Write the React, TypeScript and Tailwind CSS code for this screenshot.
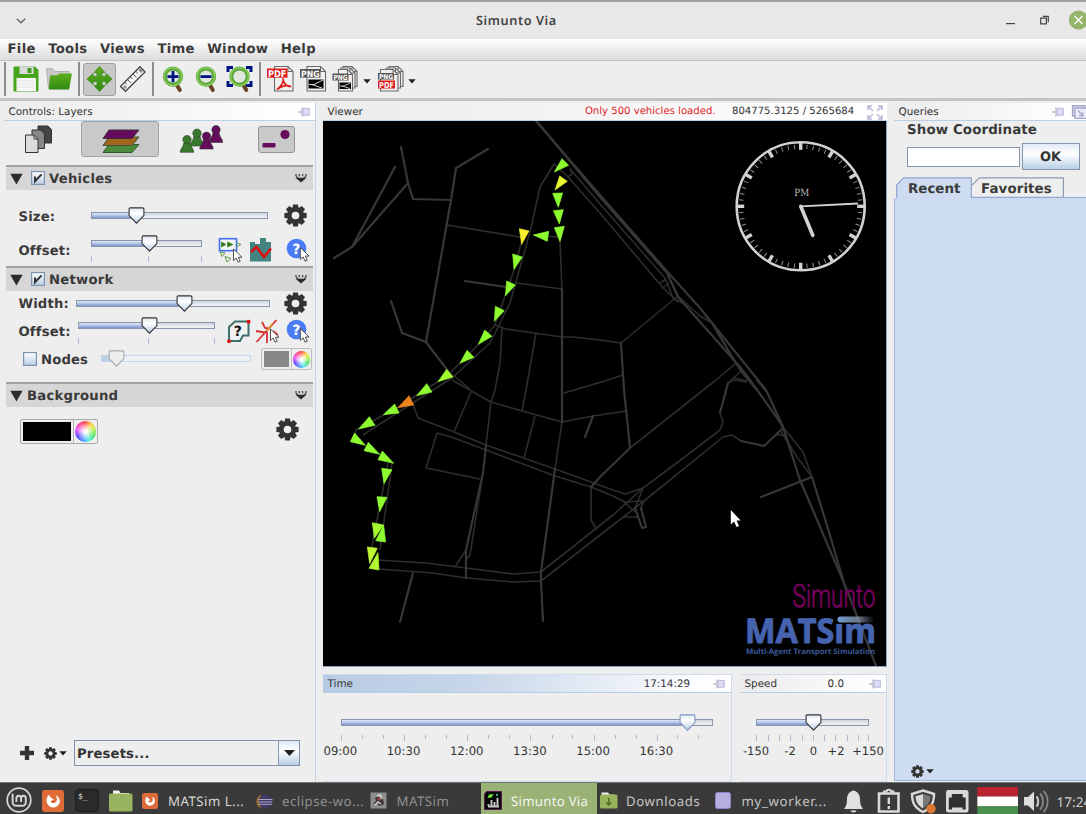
import React from "react";

type ArtProps = { x: number; y: number; w: number; h: number; className?: string; children: React.ReactNode };

function Art({ x, y, w, h, className = "", children }: ArtProps) {
  return (
    <svg width={w} height={h} viewBox={`${x} ${y} ${w} ${h}`} className={`block shrink-0 ${className}`} fill="none">
      {children}
    </svg>
  );
}

/* ---------- small shared pieces ---------- */

function Gear({ size, className = "" }: { size: number; className?: string }) {
  return (
    <svg width={size} height={size} viewBox="-12 -12 24 24" className={`block shrink-0 ${className}`}>
      {[0, 45, 90, 135, 180, 225, 270, 315].map((a) => (
        <path key={a} d="M-3.2 -7 L-2.5 -11.6 H2.5 L3.2 -7 Z" fill="#333" transform={`rotate(${a})`} />
      ))}
      <circle r="6.4" fill="none" stroke="#333" strokeWidth="4.8" />
    </svg>
  );
}

function Caret({ className = "" }: { className?: string }) {
  return (
    <svg width="8" height="5" viewBox="0 0 8 5" className={`block shrink-0 ${className}`}>
      <path d="M0.3 0.3H7.7L4 4.6Z" fill="#222" />
    </svg>
  );
}

function Pin({ className = "" }: { className?: string }) {
  return (
    <svg width="12" height="10" viewBox="0 0 12 10" className={`block shrink-0 ${className}`}>
      <path d="M5 1.4H11.3V8.2H5Z" fill="#dcdcfa" stroke="#b9b9d6" />
      <path d="M4.2 0.4V9.4M0.3 5H4" stroke="#c6c6d6" strokeWidth="2" fill="none" />
    </svg>
  );
}

function Pointer({ x, y, s = 1 }: { x: number; y: number; s?: number }) {
  return (
    <path
      transform={`translate(${x} ${y}) scale(${s})`}
      d="M0 0V12.5L3 9.9L5 14.4L7.3 13.4L5.3 9H9.2Z"
      fill="#fff"
      stroke="#444"
      strokeWidth="1"
    />
  );
}

type SliderProps = { width: number; pos: number; ticks?: number[]; disabled?: boolean; blue?: boolean; className?: string };

function Slider({ width, pos, ticks = [], disabled, blue, className = "" }: SliderProps) {
  const edge = blue ? "#7f94c4" : "#333";
  return (
    <div className={`relative flow-root h-[17px] shrink-0 ${className}`} style={{ width }}>
      <div
        className={`mt-[5px] flex h-[7px] border ${
          disabled ? "border-[#c3d5ea] bg-[#eef1f5]" : "border-[#8796ab] bg-[linear-gradient(#cfd6df,#f4f4f4)]"
        }`}
      >
        <div
          className={disabled ? "h-full bg-[#bccfe6]" : "h-full bg-[linear-gradient(#dfe8f8,#a9bce2_60%,#7d93c6)]"}
          style={{ width: disabled ? 8 : pos }}
        />
      </div>
      <svg width="17" height="17" viewBox="0 0 17 17" className="absolute top-0" style={{ left: pos - 8.5 }}>
        <defs>
          <linearGradient id="knob" x1="0" y1="0" x2="0" y2="1">
            <stop offset="0" stopColor="#dfe7f1" />
            <stop offset="0.35" stopColor="#fff" />
            <stop offset="1" stopColor="#b9cfe9" />
          </linearGradient>
        </defs>
        <path
          d="M2 0.9H15L15.9 1.8V8.6L8.5 16.2L1.1 8.6V1.8Z"
          fill={disabled ? "#eeeeee" : "url(#knob)"}
          stroke={disabled ? "#a3a9b1" : edge}
          strokeWidth="1.1"
        />
      </svg>
      {ticks.map((t) => (
        <div key={t} className="absolute top-[21px] h-[6px] w-px bg-[#a9bcd4]" style={{ left: t }} />
      ))}
    </div>
  );
}

function Check({ on }: { on?: boolean }) {
  return (
    <svg width="14" height="14" viewBox="0 0 14 14" className="block shrink-0">
      <defs>
        <linearGradient id="chk" x1="0" y1="0" x2="0" y2="1">
          <stop offset="0" stopColor="#fff" />
          <stop offset="1" stopColor="#b8cfe5" />
        </linearGradient>
      </defs>
      <rect x="0.6" y="0.6" width="12.8" height="12.8" fill="url(#chk)" stroke="#7e93ae" strokeWidth="1.2" />
      {on && <path d="M4 5.6V10.3L10.6 3.4" stroke="#333" strokeWidth="2" fill="none" />}
    </svg>
  );
}

function SectionHeader({ title, check }: { title: string; check?: boolean }) {
  return (
    <div className="ml-[2px] flex h-[25px] w-[307px] shrink-0 items-center border-t-2 border-[#a2a2a2] bg-[#d6d6d6]">
      <svg width="13" height="12" viewBox="0 0 13 12" className="ml-1 block">
        <path d="M0.3 0.8H12.6L6.4 11.4Z" fill="#2b2b2b" />
      </svg>
      <div className={check ? "ml-[8px] flex items-center" : "ml-[4px] flex items-center"}>
        {check && (
          <div className="mr-1">
            <Check on />
          </div>
        )}
        <span className="mt-[2px] text-[13.2px] leading-none font-bold tracking-[0.25px] text-[#3a3a3a]">{title}</span>
      </div>
      <svg width="12" height="9" viewBox="0 0 12 9" className="mr-[6px] mb-px ml-auto block">
        <path d="M0.5 3.8H11.5L6 8.6Z" fill="#2b2b2b" />
        <path d="M1 0V2M4.3 0V2.2M7.6 0V2.2M11 0V2M1 2.2L3 4M11 2.2L9 4" stroke="#444" strokeWidth="1.3" />
      </svg>
    </div>
  );
}

function PanelHeader({ title, children, blue }: { title: string; children?: React.ReactNode; blue?: boolean }) {
  return (
    <div
      className={`flex h-[18px] shrink-0 items-center border-b border-[#b8cfe5] pt-px ${
        blue
          ? "bg-[linear-gradient(90deg,#b8cbe4,#c6d5e9_35%,#ffffff_95%)]"
          : "bg-[linear-gradient(90deg,#ececec,#f2f2f2_35%,#ffffff_95%)]"
      }`}
    >
      <span className="mt-px ml-[4.5px] text-[10.4px] leading-none text-[#333]">{title}</span>
      {children}
    </div>
  );
}

function Wheel({ size }: { size: number }) {
  return (
    <div
      className="flex shrink-0 rounded-full bg-[conic-gradient(from_0deg,#ff4030,#ffd030,#a0f040,#30e060,#40e8e0,#4080ff,#5030ff,#e040ff,#ff3090,#ff4030)]"
      style={{ width: size, height: size }}
    >
      <div className="h-full w-full rounded-full bg-[radial-gradient(circle,#fff_8%,#ffffff00_70%)]" />
    </div>
  );
}

function HelpCursor({ className = "" }: { className?: string }) {
  return (
    <svg width="24" height="25" viewBox="0 0 24 25" className={`block shrink-0 ${className}`}>
      <circle cx="10.5" cy="10.5" r="9.8" fill="#4b7bf5" />
      <text x="10.2" y="15.6" textAnchor="middle" fontFamily="DejaVu Sans" fontWeight="700" fontSize="14" fill="#fff">
        ?
      </text>
      <Pointer x={14.3} y={9.5} s={0.95} />
    </svg>
  );
}

/* ---------- window chrome ---------- */

function TitleBar() {
  return (
    <div className="flex h-[39px] shrink-0 items-center border-t-2 border-[#a0a0a0] bg-[#e8e8e8]">
      <svg width="10" height="6" viewBox="0 0 10 6" className="ml-[16px] block">
        <path d="M0.8 0.8L5 4.8L9.2 0.8" stroke="#666" strokeWidth="1.4" fill="none" />
      </svg>
      <span className="ml-[450px] w-[82px] font-['Noto_Sans'] text-[12.7px] leading-none font-semibold tracking-[0.6px] whitespace-nowrap text-[#444]">
        Simunto Via
      </span>
      <Art x={1005} y={10} w={64} h={20} className="ml-[447px]">
        <path d="M1006 22.6H1015" stroke="#444" strokeWidth="1.2" />
        <path d="M1040.7 17.2H1046.4V22.9H1040.7Z" stroke="#444" strokeWidth="1.2" />
        <path d="M1042.8 15.4H1048.3V21.2" stroke="#444" strokeWidth="1.2" />
      </Art>
      <Art x={1069} y={9} w={17} h={22} className="-mt-px">
        <circle cx="1078.5" cy="20" r="9.6" fill="#94b36b" />
        <path d="M1074.5 16L1082.5 24M1082.5 16L1074.5 24" stroke="#fff" strokeWidth="1.3" />
      </Art>
    </div>
  );
}

function MenuBar() {
  return (
    <div className="flex h-[22px] shrink-0 items-center gap-[12.4px] border-b border-[#c4c4c4] bg-[linear-gradient(#ffffff,#dcdcdc)] pl-[7.5px] text-[13.2px] leading-none font-bold tracking-[0.32px] text-[#3a3a3a]">
      {["File", "Tools", "Views", "Time", "Window", "Help"].map((m) => (
        <span key={m} className="mt-px">
          {m}
        </span>
      ))}
    </div>
  );
}

function Separator({ className = "" }: { className?: string }) {
  return <div className={`h-[34px] w-[2px] shrink-0 bg-[#8d8d8d] ${className}`} />;
}

function Lens({ cx, cy, mode }: { cx: number; cy: number; mode: "in" | "out" | "fit" }) {
  return (
    <>
      <path d={`M${cx + 3} ${cy + 7}L${cx + 6.8} ${cy + 13.5}`} stroke="#6b4226" strokeWidth="4" strokeLinecap="round" />
      <circle cx={cx} cy={cy} r="8.2" fill="#dfe7df" stroke="#5da53a" strokeWidth="4" />
      <circle cx={cx} cy={cy} r="8.9" stroke="#86cc5a" strokeWidth="1.5" />
      {mode !== "fit" && <path d={`M${cx - 5.6} ${cy}H${cx + 5.6}`} stroke="#00157f" strokeWidth="2.8" />}
      {mode === "in" && <path d={`M${cx} ${cy - 5.6}V${cy + 5.6}`} stroke="#00157f" strokeWidth="2.8" />}
    </>
  );
}

function Sheet({ x, y, w, h }: { x: number; y: number; w: number; h: number }) {
  return (
    <>
      <path
        d={`M${x} ${y}H${x + w - 5}L${x + w} ${y + 5}V${y + h}H${x}Z`}
        fill="#f0f0f0"
        stroke="#6a6a6a"
        strokeWidth="1.1"
      />
      <path d={`M${x + w - 5} ${y}V${y + 5}H${x + w}`} stroke="#6a6a6a" />
    </>
  );
}

function Tag({ x, y, w, h, fill, label }: { x: number; y: number; w: number; h: number; fill: string; label: string }) {
  return (
    <>
      <rect x={x} y={y} width={w} height={h} fill={fill} />
      <text
        x={x + 1}
        y={y + h - 1}
        fontFamily="DejaVu Sans"
        fontWeight="700"
        fontSize={h}
        fill="#fff"
        textLength={w - 2}
        lengthAdjust="spacingAndGlyphs"
      >
        {label}
      </text>
    </>
  );
}

function Toolbar() {
  return (
    <div className="flex h-[40px] shrink-0 border-b-[3px] border-[#c4c4c4] bg-[#eeeeee] pt-px">
      <Separator className="ml-1" />
      <Art x={6} y={62} w={72} h={34}>
        <defs>
          <linearGradient id="gr" x1="0" y1="0" x2="0" y2="1">
            <stop offset="0" stopColor="#5fae1e" />
            <stop offset="1" stopColor="#2f8a12" />
          </linearGradient>
        </defs>
        <path d="M13.5 66.5H35L38.5 70V91.5H13.5Z" fill="#46a51c" />
        <rect x="19.5" y="66.5" width="14" height="7.5" fill="#dadada" />
        <rect x="27.5" y="68" width="4" height="5" fill="#3d9a1b" />
        <rect x="16.5" y="78" width="19.5" height="13" fill="#f7f7f7" />
        <path d="M17 81H35M17 84H35M17 87H35" stroke="#dedede" strokeWidth="0.8" />
        <path d="M46.5 68.8H52.5L55 71.5H69V88H48.5Z" fill="#c9c9c9" stroke="#b0b0b0" />
        <path d="M50 75.2H57L59.5 73.5H72L69 89.5H48.8Z" fill="url(#gr)" />
      </Art>
      <Separator />
      <div className="mt-px ml-[3px] h-[33px] w-[33px] rounded-[3px] border border-[#9f9f9f] bg-[#c8c8c8] p-px">
        <Art x={85} y={65} w={29} h={29}>
          <path
            d="M99.5 66.5L105 72.5H102V76.5H106V73.5L112 79L106 84.5V81.5H102V85.5H105L99.5 91.5L94 85.5H97V81.5H93V84.5L87 79L93 73.5V76.5H97V72.5H94Z"
            fill="url(#gr)"
            stroke="#3d8b1c"
            strokeWidth="0.8"
          />
        </Art>
      </div>
      <Art x={116} y={62} w={36} h={34}>
        <path d="M120.5 86.5L140 66.8L145 72L125.5 91.3Z" fill="#f6f6f6" stroke="#444" strokeWidth="1.3" />
        <path
          d="M124.8 82.2L127 84.4M127.5 79.5L131 83M130.2 76.8L132.4 79M133 74L136.5 77.5M135.7 71.2L138 73.4M138.5 68.5L141 71"
          stroke="#555"
        />
        <circle cx="125" cy="87" r="1.2" stroke="#555" strokeWidth="0.8" />
        <circle cx="141" cy="71" r="1.2" stroke="#555" strokeWidth="0.8" />
      </Art>
      <Separator />
      <Art x={154} y={62} w={105} h={34}>
        <Lens cx={173} cy={76.6} mode="in" />
        <Lens cx={206} cy={76.6} mode="out" />
        <path
          d="M228 72V67.5H233M246 67.5H251V72M228 81V85.6H233M246 85.6H251V81"
          stroke="#00157f"
          strokeWidth="3"
        />
        <Lens cx={239.5} cy={76.6} mode="fit" />
      </Art>
      <Separator />
      <Art x={261} y={62} w={100} h={34}>
        <Sheet x={274.5} y={66.5} w={18.5} h={24.5} />
        <Tag x={267} y={68.5} w={20.5} h={9.2} fill="#e01b1b" label="PDF" />
        <path d="M277 89.5C282 86 284 81 283 78.5C283 83 287 87 291 86.5C286 84.5 281 86.5 277 89.5Z" stroke="#dc1c1c" strokeWidth="1.7" />
        <Sheet x={307} y={66.5} w={18.5} h={24.5} />
        <Tag x={300} y={69} w={20.5} h={8.6} fill="#555" label="PNG" />
        <rect x="308.5" y="79.5" width="15" height="9" fill="#000" />
        <path d="M309 84.5L314 84.5L323 80M312 84.5L322 88" stroke="#eee" strokeWidth="0.9" />
        <Sheet x={343} y={66.5} w={14} h={20} />
        <Sheet x={341} y={68} w={14} h={20} />
        <Sheet x={338.5} y={69.5} w={14} h={21.5} />
        <Tag x={332.5} y={73.5} w={16} h={7} fill="#555" label="PNG" />
        <rect x="339.5" y="82.5" width="11.5" height="6.5" fill="#000" />
        <path d="M340 86L344 86L350.5 83M342 86L350 88.5" stroke="#eee" strokeWidth="0.8" />
      </Art>
      <Caret className="mt-[17px] ml-[1.5px]" />
      <Art x={371} y={62} w={36} h={34}>
        <Sheet x={389} y={66.5} w={14} h={20} />
        <Sheet x={386.5} y={68} w={14} h={20} />
        <Sheet x={380.5} y={69.5} w={17.5} h={21.5} />
        <Tag x={378} y={73} w={16} h={6.5} fill="#555" label="PNG" />
        <Tag x={378} y={80.5} w={17} h={8} fill="#e01b1b" label="PDF" />
      </Art>
      <Caret className="mt-[17px] ml-[1.5px]" />
    </div>
  );
}

/* ---------- left controls ---------- */

function Pawn({ x, y, fill }: { x: number; y: number; fill: string }) {
  return (
    <g transform={`translate(${x} ${y})`} fill={fill} stroke="#2d3a2d" strokeWidth="0.6">
      <path d="M-6.8 16.5C-6.6 12.8 -3.8 11.5 -3 6.5H3C3.8 11.5 6.6 12.8 6.8 16.5Z" />
      <circle cy="3.8" r="4.2" />
    </g>
  );
}

function LayerTabs() {
  return (
    <div className="flex h-[44px] shrink-0 items-start">
      <Art x={24} y={123} w={30} h={32} className="ml-[20px] mt-[2px]">
        <path d="M38 126H48L51.5 129.5V143H38Z" fill="#444" stroke="#333" />
        <path d="M32 130H41L44.5 134V148.5H32Z" fill="#888" stroke="#333" />
        <path d="M25.5 135H34L38 139V152.5H25.5Z" fill="#dcdcdc" stroke="#333" />
        <path d="M34 135V139H38" stroke="#333" />
      </Art>
      <div className="ml-[27px] h-[36px] w-[78px] rounded-[3px] border border-[#a4a4a4] bg-[#c9c9c9]">
        <Art x={100} y={124} w={42} h={31} className="ml-[18px] mt-[2px]">
          <path d="M109 144.5H139L132 152.5H103Z" fill="#4b8b3b" stroke="#2d5a2a" />
          <path d="M109 137H139L132 145.5H103Z" fill="#a0651c" stroke="#3f5540" />
          <path d="M109 130H139L132 138.5H103Z" fill="#650c5c" stroke="#3f2b40" />
        </Art>
      </div>
      <Art x={178} y={124} w={48} h={31} className="ml-[19px] mt-[3px]">
        <Pawn x={197} y={129.5} fill="#387a2b" />
        <Pawn x={216} y={126} fill="#650c5c" />
        <Pawn x={187} y={135.8} fill="#387a2b" />
        <Pawn x={206.5} y={132.5} fill="#650c5c" />
      </Art>
      <div className="mt-[5px] ml-[32px] h-[27px] w-[37px] rounded-[3px] border border-[#929292] bg-[#c9c9c9]">
        <Art x={259} y={127} w={35} h={25}>
          <rect x="262.5" y="143" width="13" height="4.5" rx="1" fill="#650c5c" />
          <circle cx="285" cy="134.5" r="4.6" fill="#650c5c" />
        </Art>
      </div>
    </div>
  );
}

function ControlsPanel() {
  return (
    <div className="ml-1 flex w-[312px] shrink-0 flex-col border-r border-[#c3d4e6]">
      <PanelHeader title="Controls: Layers">
        <Pin className="mr-[5px] ml-auto" />
      </PanelHeader>
      <LayerTabs />
      <SectionHeader title="Vehicles" check />
      <div className="flex h-[76px] flex-col text-[13.2px] leading-none font-bold text-[#3a3a3a]">
        <div className="flex h-[45px] items-start">
          <span className="mt-[20px] ml-[14.5px] w-[72.5px] pt-px tracking-[0.15px]">Size:</span>
          <Slider width={177} pos={45} className="mt-[17px]" />
          <Gear size={23} className="mt-[14px] ml-[15.5px]" />
        </div>
        <div className="flex h-[31px] items-start">
          <span className="mt-[10px] ml-[14.5px] w-[72.5px] tracking-[0.15px]">Offset:</span>
          <Slider width={111} pos={58} ticks={[0, 57, 110]} className="mt-0" />
          <Art x={218} y={236} w={26} h={28} className="ml-[15.5px] mt-px">
            <rect x="219.5" y="238.7" width="17" height="12" fill="#f4f4f4" stroke="#3f6ff0" strokeWidth="1.6" />
            <path d="M221.5 242L226 244.5L221.5 247ZM227.5 242L233 244.5L227.5 247Z" fill="#2b7a14" stroke="#2b7a14" strokeWidth="0.6" />
            <path d="M236 242.3L241 244.5L236 247M220 252L225 253L222 256.5ZM225 256.5L231 258.5L227 262Z" stroke="#5e9c4c" />
            <Pointer x={233.5} y={249} s={0.92} />
          </Art>
          <Art x={248} y={237} w={26} h={28} className="ml-[4.5px] mt-px">
            <path d="M250 243H255V245H260V239H266V243H271V262.5H250Z" fill="#418480" />
            <path d="M251 253L256.5 248L264 258L271 249.5" stroke="#e01010" strokeWidth="2.6" />
          </Art>
          <HelpCursor className="ml-[12px] mt-[3px]" />
        </div>
      </div>
      <SectionHeader title="Network" check />
      <div className="flex h-[91px] flex-col text-[13.2px] leading-none font-bold text-[#3a3a3a]">
        <div className="flex h-[25px] items-start">
          <span className="mt-[7px] ml-[14.5px] w-[57.5px] tracking-[0.15px]">Width:</span>
          <Slider width={194} pos={108} className="mt-[4px]" />
          <Gear size={23} className="mt-px ml-[14px]" />
        </div>
        <div className="flex h-[32px] items-start">
          <span className="mt-[10px] ml-[14.5px] w-[59.5px] tracking-[0.15px]">Offset:</span>
          <Slider width={137} pos={71} ticks={[0, 70, 136]} className="mt-px" />
          <Art x={226} y={319} w={26} h={26} className="ml-[11px] mt-[3px]">
            <path d="M229 341V327L235 321.5H248.5V335.5H243L240 341Z" fill="#f0f0f0" stroke="#3d6f6c" strokeWidth="2" />
            <text x="237.8" y="335.8" textAnchor="middle" fontFamily="DejaVu Sans" fontWeight="700" fontSize="14" fill="#111">
              ?
            </text>
            <circle cx="229" cy="341.2" r="2" fill="#e01515" />
            <circle cx="248.6" cy="321.8" r="2" fill="#e01515" />
          </Art>
          <Art x={254} y={318} w={28} h={28} className="ml-[2px] mt-[2px]">
            <path d="M276.5 320L256.5 342M262 322L265 328L270 328.5M267 343V332M256 331L265 332.5M273 331L278 335" stroke="#dc3030" strokeWidth="1.8" />
            <path d="M272 324L267 331" stroke="#e8962e" strokeWidth="1.8" />
            <Pointer x={270.5} y={329} s={0.92} />
          </Art>
          <HelpCursor className="ml-[4px] mt-[3px]" />
        </div>
        <div className="flex items-start">
          <div className="mt-[4px] ml-[19px]">
            <Check />
          </div>
          <span className="mt-[6px] ml-[4px] w-[60px] tracking-[0.15px]">Nodes</span>
          <Slider width={150} pos={15} disabled className="mt-[2px]" />
          <div className="ml-[10px] flex h-[22px] w-[51px] shrink-0 items-center rounded-[2px] border border-[#bdbdbd] bg-[#eeeeee] pl-[2px]">
            <div className="h-[16px] w-[25px] bg-[#888888]" />
            <div className="mr-[1px] ml-[2px] h-full w-px bg-[#c4c4c4]" />
            <Wheel size={17} />
          </div>
        </div>
      </div>
      <SectionHeader title="Background" />
      <div className="flex h-[333px] items-start">
        <div className="mt-[12px] ml-[16px] flex h-[25px] w-[78px] items-center rounded-[2px] border border-[#a9a9a9] bg-[#eeeeee] pl-[2px]">
          <div className="h-[19px] w-[48px] bg-black" />
          <div className="mr-[1px] ml-[2px] h-full w-px bg-[#b4b4b4]" />
          <Wheel size={21} />
        </div>
        <Gear size={23} className="mt-[11px] ml-[177.5px]" />
      </div>
      <div className="flex h-[26px] items-center">
        <Art x={19} y={745} w={16} h={16} className="ml-[15px]">
          <path d="M27 746V760M20 753H34" stroke="#333" strokeWidth="4.4" />
        </Art>
        <Gear size={13} className="ml-[9px]" />
        <Caret className="ml-[2px]" />
        <div className="ml-[7px] flex h-[26px] w-[226px] items-center border-[1.5px] border-[#7f92a9] bg-[#eeeeee]">
          <span className="mt-[3px] ml-[2px] text-[13.2px] leading-none font-bold tracking-[0.15px] text-[#333]">Presets...</span>
          <div className="ml-auto flex h-full w-[21px] items-center justify-center border-l border-[#8a9db5] bg-[linear-gradient(#dce8f4,#ffffff_40%,#b8cfe5)]">
            <svg width="11" height="6" viewBox="0 0 11 6">
              <path d="M0 0H11L5.5 6Z" fill="#222" />
            </svg>
          </div>
        </div>
      </div>
    </div>
  );
}

/* ---------- map ---------- */

const majorRoads = [
  "536,121 600,195 665,269 700,308 712,323 766,390",
  "539,124 600,197 667,273 678,297 740,367 750,380 775,415",
  "712,323 737,365 741,371 757,390",
  "757,380 767,392 783,427",
  "775,415 783,427 800,480 847,590 876,666",
  "812,477 829,532 847,593",
  "456,168 451,200 426,342 448,371",
  "488,149 456,168",
  "401,147 408,183 413,199 451,200",
  "395,167 352,247 334,258",
  "408,183 352,247",
  "391,301 402,333 426,342",
  "465,281 506,287",
  "562,289 562,422",
  "555,469 541,572 541,581 543,621",
  "593,416 585,437",
  "466,550 466,578",
  "413,573 400,622",
  "761,497 812,477",
  "621,343 624,390 630,448 600,477 591,487",
  "728,383 720,413",
  "741,441 764,446 783,428",
  "635,508 642,528 646,527 641,508",
  "486,445 483,473 466,550",
];

const minorRoads = [
  "447,225 520,237",
  "537,236 560,237",
  "560,242 562,289",
  "516,283 562,289",
  "448,371 470,389",
  "495,325 506,329 562,337 573,337 600,340 621,343 678,296",
  "502,328 500,363 495,390 491,402 486,445",
  "536,333 526,390 522,411",
  "452,380 491,402 522,411 562,422 593,416 626,411",
  "564,393 608,380 623,375",
  "562,422 555,469",
  "471,392 454,432",
  "535,416 524,458",
  "413,404 418,418 454,432 486,445 555,469 613,490 625,494 643,488",
  "437,433 454,438 486,450 555,476 591,487 613,496 625,502 644,501",
  "437,433 426,468 480,479",
  "483,473 470,555 466,560",
  "466,550 455,567",
  "591,487 591,520 597,530",
  "378,560 426,563 466,568 513,574 541,572 613,515 643,488 678,462 720,430 723,422 720,413",
  "378,569 433,573 466,578 513,582 541,581 613,525 644,501 723,437 732,435 741,441",
  "728,383 734,380 747,382",
  "728,383 740,372",
  "734,378 747,381",
  "630,448 716,380 735,364",
  "783,427 803,452 812,477",
  "780,430 797,457 812,477",
  "777,435 787,435",
  "643,488 635,508",
  "644,501 641,508",
  "623,501 635,512",
  "623,517 638,517",
  "571,170 600,204 665,278 673,298 682,303",
  "568,177 600,213 663,288 678,302",
  "660,283 666,279",
  "663,288 669,283",
  "665,269 682,303",
  "678,296 700,316 712,323",
  "554,164 540,187 530,232 510,303 490,343 452,378 433,390 400,411 363,435",
  "554,164 568,177 572,174 570,168",
  "523,236 514,270 495,325 480,343 448,375 400,406 356,430 352,440",
  "388,463 372,547",
  "392,463 380,550",
];

const carsNorth: [string, string][] = [
  ["694,216 717,176 737,196", "#8dfd2f"],
  ["696,270 710,228 733,244", "#e4f531"],
  ["706,322 689,280 719,279", "#8dfd2f"],
  ["709,372 691,332 721,329", "#8dfd2f"],
  ["711,425 694,383 724,379", "#8dfd2f"],
  ["631,405 677,394 673,424", "#8dfd2f"],
  ["596,433 589,386 618,393", "#fbf02f"],
  ["573,508 569,462 598,471", "#8dfd2f"],
  ["547,588 551,543 577,555", "#8dfd2f"],
  ["514,664 517,619 544,632", "#8dfd2f"],
  ["466,733 485,690 507,709", "#8dfd2f"],
  ["411,790 432,751 453,772", "#8dfd2f"],
  ["345,845 371,808 390,831", "#a2fd2f"],
];

const carsSouth: [string, string][] = [
  ["281,47 311,11 327,36", "#8dfd2f"],
  ["225,83 258,47 272,75", "#ec841c"],
  ["181,104 215,72 228,99", "#8dfd2f"],
  ["107,147 139,110 156,136", "#8dfd2f"],
  ["127,196 95,159 82,185", "#8dfd2f"],
  ["170,223 136,187 123,212", "#8dfd2f"],
  ["212,250 178,213 165,239", "#8dfd2f"],
  ["183,311 176,265 207,269", "#8dfd2f"],
  ["170,395 162,350 192,352", "#8dfd2f"],
  ["154,475 148,428 182,435", "#a6fb30"],
  ["182,436 158,482 188,486", "#8dfd2f"],
  ["140,551 133,501 163,505", "#bdf832"],
  ["165,518 138,565 168,570", "#b4fa32"],
];

function MapView() {
  const cx = 800.7;
  const cy = 206.3;
  return (
    <Art x={323} y={121} w={563} h={545} className="bg-black">
      <g stroke="#2d2d2d" strokeWidth="1.6" strokeLinejoin="round">
        {minorRoads.map((p) => (
          <polyline key={p} points={p} />
        ))}
      </g>
      <g stroke="#373737" strokeWidth="2.2" strokeLinejoin="round" strokeLinecap="round">
        {majorRoads.map((p) => (
          <polyline key={p} points={p} />
        ))}
      </g>
      <g transform="translate(323 100) scale(0.33333)">
        {carsNorth.map(([p, c]) => (
          <polygon key={p} points={p} fill={c} stroke={c} strokeWidth="2" />
        ))}
      </g>
      <g transform="translate(323 380) scale(0.33333)">
        {carsSouth.map(([p, c]) => (
          <polygon key={p} points={p} fill={c} stroke={c} strokeWidth="2" />
        ))}
      </g>

      <circle cx={cx} cy={cy} r="64" stroke="#d2d2d2" strokeWidth="2.6" />
      {Array.from({ length: 60 }, (_, i) => (
        <path
          key={i}
          d={i % 5 === 0 ? "M0 -63.5V-56.5" : "M0 -62V-57.5"}
          stroke={i % 5 === 0 ? "#d2d2d2" : "#8f8f8f"}
          strokeWidth={i % 5 === 0 ? 3.4 : 1}
          transform={`translate(${cx} ${cy}) rotate(${i * 6})`}
        />
      ))}
      <text
        x="794.3"
        y="196.3"
        fontFamily="DejaVu Serif"
        fontSize="10"
        fill="#bdbdbd"
        textLength="15"
        lengthAdjust="spacingAndGlyphs"
      >
        PM
      </text>
      <path d={`M${cx} ${cy}L858 203.5`} stroke="#d2d2d2" strokeWidth="1.8" />
      <path d={`M${cx} ${cy}L812.8 235.3`} stroke="#d2d2d2" strokeWidth="3.6" strokeLinecap="round" />

      <defs>
        <linearGradient id="glow" x1="0" y1="0" x2="1" y2="0">
          <stop offset="0" stopColor="#6f9fd8" />
          <stop offset="0.55" stopColor="#8496aa" stopOpacity="0.8" />
          <stop offset="1" stopColor="#8496aa" stopOpacity="0" />
        </linearGradient>
      </defs>
      <text
        x="792.5"
        y="606.5"
        fontFamily="Roboto"
        fontSize="32"
        fontWeight="300"
        fill="#72005a"
        stroke="#72005a"
        strokeWidth="0.9"
        textLength="83"
        lengthAdjust="spacingAndGlyphs"
      >
        Simunto
      </text>
      <text
        x="745"
        y="643"
        fontFamily="Open Sans"
        fontSize="34"
        fontWeight="700"
        fill="#4563ae"
        stroke="#4563ae"
        strokeWidth="1"
        textLength="131"
        lengthAdjust="spacingAndGlyphs"
      >
        MATSım
      </text>
      <rect x="837.5" y="616.5" width="37" height="6" rx="3" fill="url(#glow)" />
      <text
        x="746"
        y="653.5"
        fontFamily="Open Sans"
        fontSize="7.6"
        fontWeight="700"
        fill="#3c5898"
        textLength="129"
        lengthAdjust="spacingAndGlyphs"
      >
        Multi-Agent Transport Simulation
      </text>
      <path d="M730.8 510V524.5L734 521.5L736.6 527L739 526L736.6 520.5H740.6Z" fill="#fff" />
    </Art>
  );
}

/* ---------- centre column ---------- */

const speedTicks: [number, string][] = [
  [756, "-150"],
  [790, "-2"],
  [813.5, "0"],
  [836, "+2"],
  [868, "+150"],
];

function CenterColumn() {
  return (
    <div className="ml-[7px] flex w-[564px] shrink-0 flex-col">
      <PanelHeader title="Viewer">
        <span className="mt-px ml-auto text-[10.1px] leading-none whitespace-nowrap text-[#dd1c26]">Only 500 vehicles loaded.</span>
        <span className="mt-px ml-[16.5px] w-[123px] text-[10.1px] leading-none whitespace-nowrap text-[#333]">804775.3125 / 5265684</span>
        <svg width="16" height="15" viewBox="0 0 16 15" className="mr-[4px] ml-[12px] block" fill="none" stroke="#b9bad8" strokeWidth="1.6">
          <path d="M1 5V1H5M1 1L6 6M11 1H15V5M15 1L10 6M1 10V14H5M1 14L6 9M15 10V14H11M15 14L10 9" />
        </svg>
      </PanelHeader>
      <div className="border-r border-b border-[#8fa3c4]">
        <MapView />
      </div>
      <div className="mt-[7px] flex h-[108px]">
        <div className="flex w-[409px] shrink-0 flex-col border-t border-r border-b border-[#cddcec]">
          <PanelHeader title="Time" blue>
            <span className="mr-[23px] ml-auto text-[10.3px] leading-none text-[#333]">17:14:29</span>
            <Pin className="mr-[6px]" />
          </PanelHeader>
          <div className="ml-[18px] pt-[21px]">
            <Slider width={372} pos={346.5} blue ticks={[0, 63, 126, 189, 253, 316]} />
          </div>
          <div className="relative h-0">
            {[21, 42, 84, 105, 147, 168, 211, 231, 274, 295, 336, 357].map((t) => (
              <div key={t} className="absolute top-[4px] h-[4px] w-px bg-[#a9bcd4]" style={{ left: 18 + t }} />
            ))}
          </div>
          <div className="mt-[15px] ml-[0.5px] flex text-[11.7px] leading-none text-[#333]">
            {["09:00", "10:30", "12:00", "13:30", "15:00", "16:30"].map((t) => (
              <span key={t} className="w-[63.2px]">
                {t}
              </span>
            ))}
          </div>
        </div>
        <div className="ml-[8px] flex w-[147px] shrink-0 flex-col border-t border-r border-b border-[#cddcec]">
          <PanelHeader title="Speed">
            <span className="mr-[25px] ml-auto text-[10.3px] leading-none text-[#333]">0.0</span>
            <Pin className="mr-[5px]" />
          </PanelHeader>
          <div className="ml-[15.5px] pt-[21px]">
            <Slider width={113} pos={57.5} ticks={[0, 12, 23, 34, 46, 57, 68, 79, 91, 102, 112]} />
          </div>
          <div className="relative mt-[15px] h-[12px] text-[11.5px] leading-none text-[#333]">
            {speedTicks.map(([x, t]) => (
              <span key={t} className="absolute -translate-x-1/2 whitespace-nowrap" style={{ left: x - 740 }}>
                {t}
              </span>
            ))}
          </div>
        </div>
      </div>
    </div>
  );
}

/* ---------- queries ---------- */

function QueriesPanel() {
  return (
    <div className="ml-[7px] flex w-[192px] shrink-0 flex-col">
      <PanelHeader title="Queries">
        <Pin className="ml-auto" />
        <svg width="15" height="14" viewBox="0 0 15 14" className="ml-[7px] block shrink-0" fill="none" stroke="#a4a5c8">
          <path d="M1.5 0.7H14V11H1.5Z" fill="#cfd0ea" strokeWidth="1.3" />
          <path d="M4 3.2H16V13.4H4Z" fill="#ededfa" strokeWidth="1.2" />
          <path d="M7 5.5L11.5 10.5M11.8 7V10.8H8" strokeWidth="1.2" />
        </svg>
      </PanelHeader>
      <span className="mt-[3px] ml-[13px] text-[13.4px] leading-none font-bold tracking-[0.1px] whitespace-nowrap text-[#3a3a3a]">
        Show Coordinate
      </span>
      <div className="mt-[6px] flex h-[27px] items-center pl-[13px]">
        <div className="h-[20px] w-[113px] border-[1.5px] border-[#8496ae] bg-white" />
        <div className="ml-[1.5px] flex h-[27px] w-[58px] items-center justify-center border-[1.5px] border-[#8496ae] bg-[linear-gradient(#dfe9f4,#ffffff_40%,#b8cfe5)] pt-px text-[13px] font-bold text-[#333]">
          OK
        </div>
      </div>
      <div className="mt-[7px] flex h-[21px] pl-[2px] text-[13.4px] leading-none font-bold text-[#3a3a3a]">
        <div className="relative flex w-[76px] items-center pl-[12px]">
          <Art x={0} y={0} w={76} h={21} className="absolute inset-0">
            <path d="M0.6 21V8L7.5 0.8H75.4V21" fill="#cedcf2" stroke="#93a7d0" strokeWidth="1.3" />
          </Art>
          <span className="relative mt-[3px]">Recent</span>
        </div>
        <div className="relative flex w-[92px] items-center pl-[9px]">
          <Art x={0} y={0} w={92} h={21} className="absolute inset-0">
            <path d="M0 8L7.5 0.8H91.4V20" stroke="#8f9bb0" strokeWidth="1.2" />
            <path d="M0 20.4H92" stroke="#93a7d0" strokeWidth="1.2" />
          </Art>
          <span className="relative mt-[3px] tracking-[0.1px]">Favorites</span>
        </div>
        <div className="flex-1 border-b border-[#93a7d0]" />
      </div>
      <div className="flex h-[583px] items-end border-b border-l-[1.5px] border-[#a3b8e0] bg-[#cedcf2]">
        <div className="mb-[2px] ml-[16px] flex items-center">
          <Gear size={13} />
          <Caret className="ml-[2px]" />
        </div>
      </div>
    </div>
  );
}

/* ---------- taskbar ---------- */

function FirefoxTile({ size, className = "" }: { size: number; className?: string }) {
  return (
    <svg width={size} height={size} viewBox="0 0 22 22" className={`block shrink-0 ${className}`}>
      <rect width="22" height="22" rx="3" fill="#de6b38" />
      <path d="M7 4.5C3.5 8 3.8 13.5 7.5 16.2C11 18.6 16 17.2 17.5 13.2C18.7 9.8 17 6.5 13.5 5.2C15.2 7.5 15.5 10 14 11.8C12.3 13.8 9.3 13.4 8.6 11.2L12 9.6C10.5 8.8 9.5 8.5 9.5 7.5C8.2 7.3 7.2 6 7 4.5Z" fill="#fff" />
    </svg>
  );
}

function Taskbar() {
  return (
    <div className="flex h-[32px] shrink-0 items-center border-t-[1.5px] border-[#777] bg-[#3a3a3a] font-['Noto_Sans'] text-[13.2px] leading-none whitespace-nowrap text-[#c9c9c9]">
      <svg width="26" height="26" viewBox="0 0 26 26" className="mt-[3px] ml-[5.5px] block shrink-0" fill="none" stroke="#d6d6d6">
        <circle cx="13" cy="13" r="11.8" strokeWidth="1.7" />
        <path
          d="M6.6 6.8V15C6.6 17.4 8 18.8 10.5 18.8H16C18.5 18.8 19.8 17.4 19.8 15V11.4C19.8 7.8 15.1 7.8 15.1 11.4V15M15.1 11.4C15.1 7.8 10.4 7.8 10.4 11.4V15"
          strokeWidth="1.9"
        />
      </svg>
      <FirefoxTile size={22} className="mt-[4px] ml-[10px]" />
      <svg width="24" height="23" viewBox="0 0 24 23" className="mt-[4px] ml-[11px] block shrink-0">
        <rect x="0.5" y="0.5" width="23" height="22" rx="3" fill="#2a2a2a" stroke="#1c1c1c" />
        <text x="3" y="10" fontFamily="DejaVu Sans Mono" fontSize="8" fill="#ddd">
          $_
        </text>
      </svg>
      <svg width="24" height="22" viewBox="0 0 24 22" className="mt-[4px] ml-[10.5px] block shrink-0">
        <path d="M4 0.5H10L11.5 3H20V6H4Z" fill="#f2f2f2" />
        <rect y="3.5" width="23.5" height="18" rx="1.5" fill="#98b35f" />
      </svg>
      <FirefoxTile size={16} className="mt-[5px] ml-[9px]" />
      <span className="mt-[6px] ml-[10px] w-[88px] tracking-[0.5px] text-[#d8d8d8]">MATSim L...</span>
      <svg width="17" height="15" viewBox="0 0 17 15" className="mt-[5px] block shrink-0">
        <path d="M6 0.5C-1.5 2 -1.5 13 6 14.5C2.5 11 2.5 4 6 0.5Z" fill="#9a6a2e" />
        <circle cx="9.3" cy="7.5" r="6.8" fill="#413a69" />
        <path d="M2 5.5H16.5M2 8H16.5M3 10.3H16" stroke="#aaa7c4" strokeWidth="1" />
      </svg>
      <span className="mt-[6px] ml-[9px] w-[88px] tracking-[0.5px] text-[#8f8f8f]">eclipse-wo...</span>
      <svg width="17" height="17" viewBox="0 0 17 17" className="mt-[3px] block shrink-0">
        <rect x="0.5" y="0.5" width="16" height="16" fill="#8d8d8d" />
        <path d="M3 12L6 9L5 6L9 4L10 8L13 7L14 12L10 14L7 12Z" fill="#3d3535" />
        <path d="M5 13L8 10L11 12M7 4L10 3L12 6" stroke="#d8d8d8" strokeWidth="1.5" fill="none" />
        <circle cx="9" cy="7" r="1.5" fill="#a83c3c" />
      </svg>
      <span className="mt-[6px] ml-[9.5px] w-[84.5px] tracking-[0.5px] text-[#8f8f8f]">MATSim</span>
      <div className="flex h-full w-[116px] shrink-0 items-center bg-[#9bb276]">
        <svg width="18" height="19" viewBox="0 0 18 19" className="mt-[3px] ml-[3px] block shrink-0">
          <path d="M2.5 0.5H17.5V18.5H0.5V3Z" fill="#050505" stroke="#5d1b55" />
          <path d="M4.5 15V13M7.5 15V9M10.5 15V11M13.5 15V7M4 15.5H15" stroke="#c8c8c8" strokeWidth="1.9" />
          <path d="M3.5 7L5 3.5L9.5 3L7.5 6.5Z" fill="#76e83a" />
          <circle cx="13" cy="3.8" r="1.1" fill="#49b8c0" />
        </svg>
        <span className="mt-[6px] ml-[9px] tracking-[0.28px] text-[#f4f4f4]">Simunto Via</span>
      </div>
      <svg width="18" height="17" viewBox="0 0 18 17" className="mt-[4px] ml-[3px] block shrink-0">
        <path d="M1.5 0.5H8L9.5 2.5H14V4H1.5Z" fill="#eee" />
        <rect y="2.5" width="17.5" height="14" rx="1.5" fill="#97b35c" />
        <path d="M8.7 6V12.5M6 10.2L8.7 13L11.4 10.2" stroke="#4f6a23" strokeWidth="1.4" fill="none" />
      </svg>
      <span className="mt-[6px] ml-[8px] w-[89px] tracking-[0.6px] text-[#c4c4c4]">Downloads</span>
      <svg width="16" height="17" viewBox="0 0 16 17" className="mt-[4px] block shrink-0">
        <rect x="0.5" y="0.5" width="15" height="16" rx="2" fill="#b7aee0" stroke="#8d84cf" strokeWidth="1" />
      </svg>
      <span className="mt-[6px] ml-[10.5px] w-[101px] tracking-[0.7px] text-[#c4c4c4]">my_worker...</span>
      <Art x={843} y={787} w={243} h={27} className="mt-[3px]">
        <path d="M853.5 790.5C858 791.5 860 795 860 799.5C860 804 861 806.5 863 809H844C846 806.5 847 804 847 799.5C847 795 849 791.5 853.5 790.5Z" fill="#e0e0e0" />
        <path d="M850.5 810.5H856.5C856 813 851 813 850.5 810.5Z" fill="#e0e0e0" />
        <path d="M879 793.5H898.5V811.5H879Z" stroke="#dadada" strokeWidth="2.6" />
        <path d="M884 794V791.5H886.5C886.5 789 891 789 891 791.5H893.5V794" stroke="#dadada" strokeWidth="2" />
        <path d="M888.8 797.5V804M888.8 806V809" stroke="#dadada" strokeWidth="2.4" />
        <path d="M923 790.5L934 794C934 803 931 808 923 812C915 808 912 803 912 794Z" stroke="#d8d8d8" strokeWidth="2.4" />
        <path d="M923 794V808.5C918 805.5 915.5 802 915.5 796.3Z" fill="#d8d8d8" />
        <path d="M923 794V808.5C928 805.5 930.5 802 930.5 796.3Z" fill="#777" />
        <circle cx="931" cy="808.8" r="4.7" fill="#df7832" />
        <rect x="946" y="790" width="22.5" height="22.5" rx="2.5" fill="#dadada" />
        <path d="M948.8 809.5V797.5H951.8V794H962.7V797.5H965.7V809.5H962.5V807.5H952V809.5Z" fill="#303030" />
        <rect x="977.3" y="786.8" width="40.7" height="10" fill="#b8232f" />
        <rect x="977.3" y="796.5" width="40.7" height="10" fill="#ffffff" />
        <rect x="977.3" y="806.3" width="40.7" height="8" fill="#4b8f4c" />
        <path d="M1024 797H1028L1034 791.5V811L1028 805.5H1024Z" fill="#dedede" />
        <path d="M1036.5 796.5C1038.8 799 1038.8 804 1036.5 806.5" stroke="#d0d0d0" strokeWidth="2" />
        <path d="M1040 793.5C1044 797.5 1044 805.5 1040 809.5M1043.5 791C1049 796.5 1049 806.5 1043.5 812" stroke="#858585" strokeWidth="1.8" />
        <text x="1056.5" y="807" fontFamily="Noto Sans" fontSize="13.6" fill="#cdcdcd">
          17:24
        </text>
      </Art>
    </div>
  );
}

export default function App() {
  return (
    <div className="flex h-[814px] w-[1086px] flex-col overflow-hidden bg-[#eeeeee] font-['DejaVu_Sans',sans-serif] [text-rendering:geometricPrecision]">
      <TitleBar />
      <MenuBar />
      <Toolbar />
      <div className="-ml-px flex h-[681px] shrink-0 overflow-hidden border-l border-white pt-[2px]">
        <ControlsPanel />
        <CenterColumn />
        <QueriesPanel />
      </div>
      <Taskbar />
    </div>
  );
}
